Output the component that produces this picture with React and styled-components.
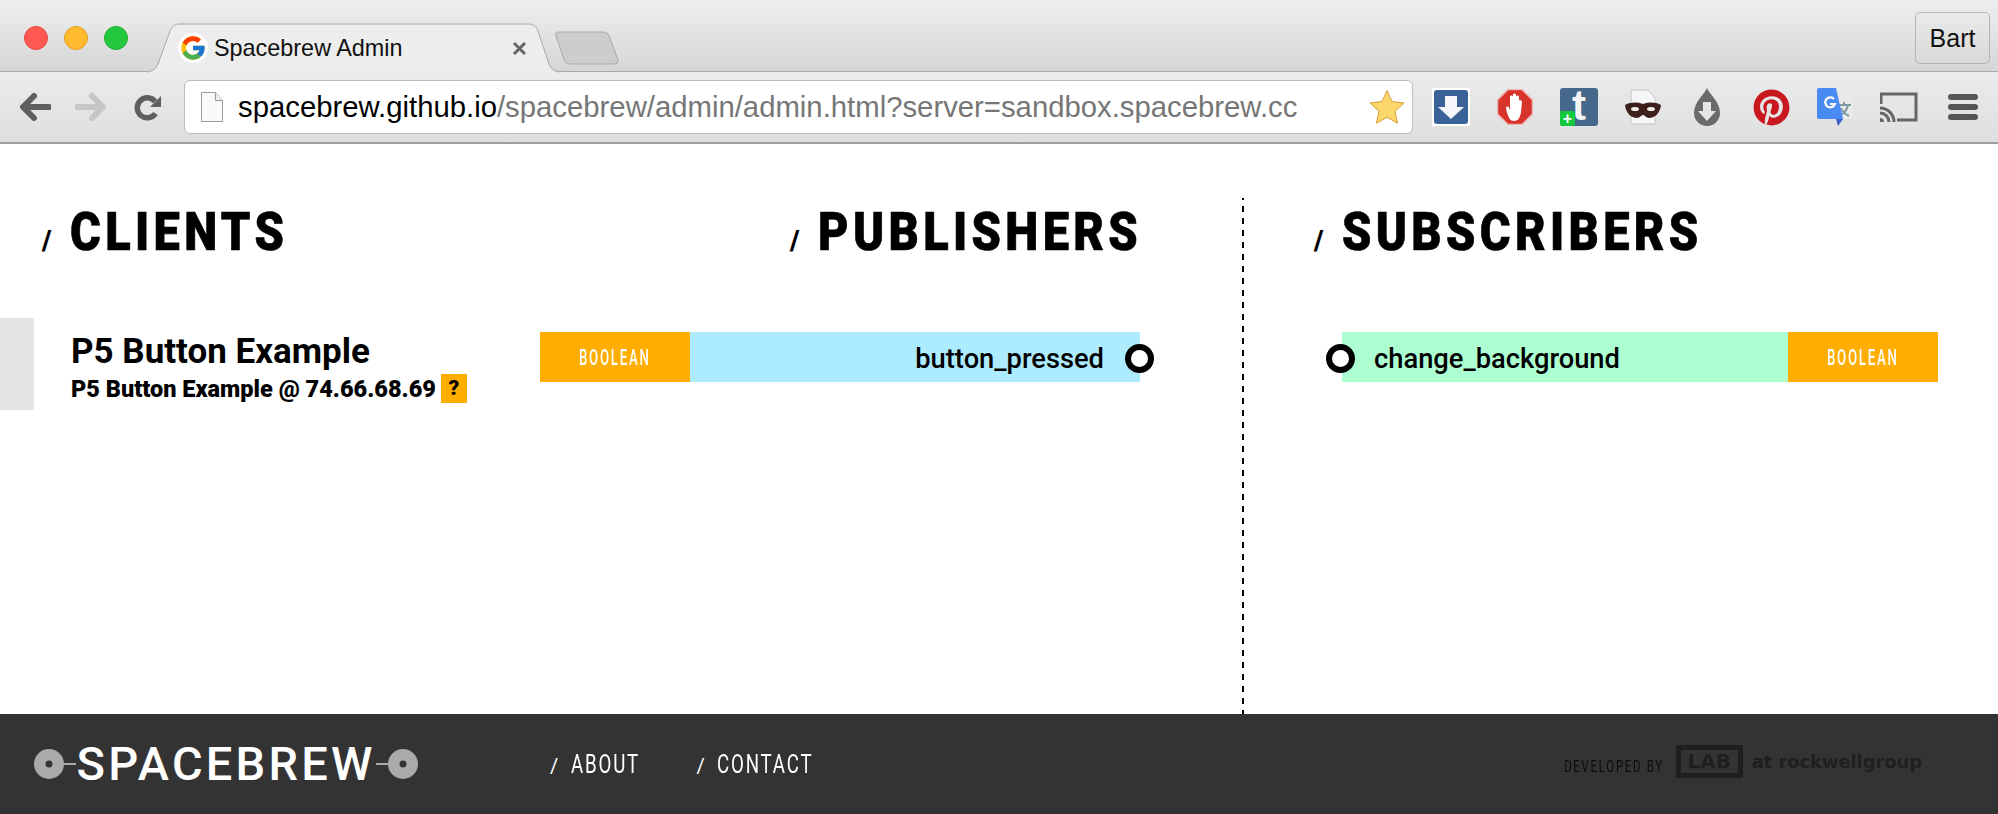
import React from "react";
import styled, { createGlobalStyle } from "styled-components";
import { FcGoogle } from "react-icons/fc";
import { FaPinterest } from "react-icons/fa";

const GlobalStyle = createGlobalStyle`
  html, body {
    margin: 0;
    padding: 0;
    background: #fff;
    font-family: "Roboto", sans-serif;
  }
  * { box-sizing: border-box; }
`;

const Page = styled.div`
  display: flex;
  flex-direction: column;
  width: 1998px;
  height: 814px;
  overflow: hidden;
`;

/* no condensed family is installed, so the DIN look is squeezed by hand */
const Squeezed = styled.span`
  display: inline-block;
  white-space: nowrap;
  transform: scaleX(${(p) => p.$x});
  transform-origin: ${(p) => p.$origin || "left"} center;
`;

/* browser chrome */
const TabStrip = styled.div`
  position: relative;
  display: flex;
  align-items: flex-start;
  height: 72px;
  padding: 0 8px 0 24px;
  background: linear-gradient(#eeeeee, #d6d6d6);
  border-bottom: 1px solid #a8a8a8;
`;

const Lights = styled.div`
  display: flex;
  gap: 16px;
  margin-top: 26px;
`;

const Light = styled.span`
  width: 24px;
  height: 24px;
  border-radius: 50%;
  background: ${(p) => p.$color};
  border: 1px solid ${(p) => p.$edge};
`;

const Tab = styled.div`
  position: relative;
  display: flex;
  align-items: center;
  width: 412px;
  height: 50px;
  margin: 23px 0 0 19px;
  padding: 0 32px 0 31px;
  font-family: "Liberation Sans", sans-serif;
  font-size: 23.4px;
  color: #111;
`;

const TabShape = styled.svg`
  position: absolute;
  left: 0;
  top: 0;
`;

const Favicon = styled.span`
  position: relative;
  display: flex;
  align-items: center;
  justify-content: center;
  width: 30px;
  height: 30px;
  margin-right: 6px;
  border-radius: 50%;
  background: #fff;
`;

const TabTitle = styled.span`
  position: relative;
  flex: 1;
`;

const TabClose = styled.svg`
  position: relative;
`;

const NewTab = styled.svg`
  margin: 31px 0 0 -4px;
`;

const ProfileButton = styled.div`
  display: flex;
  align-items: center;
  justify-content: center;
  width: 75px;
  height: 52px;
  margin: 12px 0 0 auto;
  border: 1px solid #b4b4b4;
  border-radius: 5px;
  font-family: "Liberation Sans", sans-serif;
  font-size: 25px;
  color: #111;
`;

const Toolbar = styled.div`
  display: flex;
  align-items: center;
  height: 72px;
  padding-left: 20px;
  background: linear-gradient(#ebebeb, #dfdfdf);
  border-bottom: 2px solid #9d9d9d;
`;

const NavIcon = styled.svg`
  flex: none;
  margin-right: ${(p) => p.$gap}px;
`;

const AddressBar = styled.div`
  display: flex;
  align-items: center;
  width: 1229px;
  height: 54px;
  padding: 0 7px 0 16px;
  background: #fff;
  border: 1px solid #bdbdbd;
  border-radius: 6px;
  font-family: "Liberation Sans", sans-serif;
  font-size: 29.3px;
  color: #767676;
  white-space: nowrap;
`;

const FileIcon = styled.svg`
  flex: none;
  margin-right: 15px;
`;

const Host = styled.span`
  color: #000;
`;

const Star = styled.svg`
  margin-left: auto;
  flex: none;
`;

const Extensions = styled.div`
  display: flex;
  margin-left: 6px;
`;

const ExtSlot = styled.div`
  display: flex;
  align-items: center;
  justify-content: center;
  width: 64px;
  height: 40px;
`;

const TumblrTile = styled.div`
  position: relative;
  display: flex;
  justify-content: center;
  width: 38px;
  height: 38px;
  border-radius: 3px;
  background: #46688a;
  font-family: "Liberation Sans", sans-serif;
  font-size: 42px;
  font-weight: 700;
  line-height: 36px;
  color: #f2f4f6;
`;

const TumblrPlus = styled.span`
  position: absolute;
  left: 0;
  bottom: 0;
  width: 15px;
  height: 15px;
  border-radius: 2px;
  background: #14c93c;
  font-family: "Liberation Sans", sans-serif;
  font-size: 16px;
  line-height: 15px;
  text-align: center;
  color: #fff;
`;

/* admin panels */
const Main = styled.main`
  flex: 1;
  display: flex;
  background: #fff;
`;

const ClientsColumn = styled.section`
  width: 540px;
`;

const PublishersColumn = styled.section`
  width: 702px;
  padding-right: 102px;
`;

const SubscribersColumn = styled.section`
  flex: 1;
  padding: 0 60px 0 70px;
`;

const Divider = styled.div`
  width: 2px;
  margin-top: 54px;
  background: repeating-linear-gradient(#000 0 6px, transparent 6px 12px) 0 -4px;
`;

const HeadBlock = styled.div`
  display: flex;
  align-items: baseline;
  height: 188px;
  padding: 62px 0 0 ${(p) => p.$left}px;
`;

const Slash = styled.span`
  font-family: "Roboto", sans-serif;
  font-weight: 900;
  font-size: 27px;
  color: #000;
  margin-right: 19px;
`;

const Heading = styled.h1`
  margin: 0;
  font-family: "Roboto", sans-serif;
  font-weight: 900;
  font-size: 54px;
  line-height: 52px;
  letter-spacing: 5px;
  color: #000;
  -webkit-text-stroke: 0.7px #000;
`;

const ClientRow = styled.div`
  height: 92px;
  margin-top: -14px;
  padding: 15px 0 0 37px;
  border-left: 34px solid #e4e4e4;
`;

const ClientName = styled.div`
  font-size: 35px;
  font-weight: 700;
  line-height: 38px;
  color: #000;
`;

const ClientAddress = styled.div`
  display: flex;
  align-items: center;
  gap: 5px;
  margin-top: 3px;
  font-size: 23.5px;
  font-weight: 900;
  line-height: 28px;
  color: #000;
`;

const HelpBadge = styled.span`
  width: 26px;
  height: 29px;
  background: #ffae00;
  font-size: 21px;
  line-height: 29px;
  text-align: center;
`;

const EndpointRow = styled.div`
  position: relative;
  display: flex;
  height: 50px;
  margin-left: ${(p) => (p.$sub ? 28 : 0)}px;
  flex-direction: ${(p) => (p.$sub ? "row-reverse" : "row")};
`;

const TypeTag = styled.div`
  flex: none;
  display: flex;
  align-items: center;
  justify-content: center;
  width: 150px;
  background: #ffae00;
  font-size: 22px;
  font-weight: 500;
  letter-spacing: 3px;
  color: #fff;
`;

const EndpointName = styled.div`
  flex: 1;
  display: flex;
  align-items: center;
  justify-content: ${(p) => (p.$sub ? "flex-start" : "flex-end")};
  padding: 3px 36px 0 32px;
  background: ${(p) => (p.$sub ? "#adffd2" : "#adecff")};
  font-size: 27.3px;
  font-weight: 500;
  color: #000;
`;

const Port = styled.span`
  position: absolute;
  top: 12px;
  ${(p) => (p.$sub ? "left: -16px;" : "right: -14px;")}
  width: 29px;
  height: 29px;
  border: 6px solid #000;
  border-radius: 50%;
  background: #fff;
  filter: blur(0.5px);
`;

/* footer */
const Footer = styled.footer`
  display: flex;
  align-items: center;
  height: 100px;
  padding: 0 76px 0 34px;
  background: #333;
`;

const Logo = styled.div`
  display: flex;
  align-items: center;
  width: 384px;
`;

const LogoDisc = styled.svg`
  flex: none;
`;

const LogoWire = styled.span`
  flex: none;
  width: 12px;
  height: 2px;
  background: #aaa;
`;

const LogoText = styled.span`
  flex: 1;
  font-family: "Roboto", sans-serif;
  font-size: 47px;
  font-weight: 500;
  letter-spacing: 3.2px;
  line-height: 50px;
  text-align: center;
  white-space: nowrap;
  color: #fff;
`;

const FooterNav = styled.nav`
  display: flex;
  margin-left: 132px;
`;

const FooterLink = styled.a`
  width: 146.5px;
  font-size: 26px;
  letter-spacing: 2.5px;
  white-space: nowrap;
  color: #fff;
`;

const LinkSlash = styled.span`
  font-size: 20px;
  margin-right: 10px;
`;

const Credit = styled.div`
  display: flex;
  align-items: center;
  margin-left: auto;
  color: #0c0c0c;
`;

const CreditLabel = styled.span`
  font-size: 17px;
  letter-spacing: 2.6px;
  margin-right: 12px;
  margin-top: 4px;
`;

const LabBox = styled.span`
  width: 67px;
  height: 33px;
  margin-bottom: 5px;
  border: 5px solid #1f1f1f;
  font-family: "DejaVu Sans", sans-serif;
  font-size: 20px;
  font-weight: 700;
  line-height: 23px;
  text-align: center;
  color: #1f1f1f;
  filter: blur(0.6px);
`;

const LabText = styled.span`
  margin: 0 0 5px 9px;
  font-family: "DejaVu Sans", sans-serif;
  font-size: 18px;
  font-weight: 700;
  letter-spacing: -0.1px;
  color: #1f1f1f;
  filter: blur(0.6px);
`;

/* drawn icons */
const BackIcon = ({ color, gap, flip }) => (
  <NavIcon $gap={gap} width="31" height="28" viewBox="0 0 31 28">
    <g transform={flip ? "translate(31 0) scale(-1 1)" : undefined}>
      <path d="M14 3 3 14l11 11M4 14h25" fill="none" stroke={color} strokeWidth="6" strokeLinecap="round" strokeLinejoin="round" />
    </g>
  </NavIcon>
);

const ReloadIcon = () => (
  <NavIcon $gap={23} width="27" height="27" viewBox="0 0 27 27">
    <path d="M21.5 19.5a10 10 0 1 1-.5-12" fill="none" stroke="#5f5f5f" strokeWidth="5.5" />
    <path d="M27 2v11H16z" fill="#5f5f5f" />
  </NavIcon>
);

const DownloadIcon = () => (
  <svg width="38" height="38" viewBox="0 0 38 38">
    <rect width="38" height="38" fill="#fff" />
    <rect x="2" y="2" width="34" height="34" rx="3" fill="#3a6299" />
    <path d="M13 8h12v11h7L19 31 6 19h7z" fill="#f4f6fa" />
  </svg>
);

const StopIcon = () => (
  <svg width="36" height="36" viewBox="0 0 36 36">
    <path d="M11 .5h14L35.5 11v14L25 35.5H11L.5 25V11z" fill="#d8342c" stroke="#eeb6b2" strokeWidth="1.5" />
    <path d="M9 19c0-2 3-2 3 0l1 2 0-13c0-2 3-2 3 0V6c0-2 3-2 3 0v2c0-2 3-2 3 0v4c0-2 3-1 3 1l-1 10c-1 6-3 9-7 9s-6-3-8-13z" fill="#fff" />
  </svg>
);

const MaskIcon = () => (
  <svg width="36" height="36" viewBox="0 0 36 36">
    <path d="M6 1h17l7 8v26H6z" fill="#f6f6f6" stroke="#c4c4c4" />
    <path d="M0 16c6-3 12-3 18-1 6-2 12-2 18 1-1 9-7 13-12 13-3 0-4-3-6-3s-3 3-6 3C7 29 1 25 0 16z" fill="#3d1f1c" />
    <ellipse cx="10" cy="20" rx="4" ry="2" fill="#eee" />
    <ellipse cx="26" cy="20" rx="4" ry="2" fill="#eee" />
  </svg>
);

const DropIcon = () => (
  <svg width="26" height="38" viewBox="0 0 26 38">
    <path d="M13 0c3 7 13 14 13 25a13 13 0 0 1-26 0C0 14 10 7 13 0z" fill="#6b6b6b" />
    <path d="M9 14h8v9h5L13 33 4 23h5z" fill="#e6e6e6" />
  </svg>
);

const TranslateIcon = () => (
  <svg width="36" height="38" viewBox="0 0 36 38">
    <path d="M16 8h17a3 3 0 0 1 3 3v17a3 3 0 0 1-3 3H20z" fill="#e9e9e9" />
    <path d="M21 17h13M27 14v3M31 17c-1 5-5 9-9 11M24 20c1 3 4 6 8 8" fill="none" stroke="#7d9aa3" strokeWidth="2" />
    <path d="M2 0h17l7 31H2a2 2 0 0 1-2-2V2a2 2 0 0 1 2-2z" fill="#4a8af4" />
    <path d="M19 31h7l-5 7z" fill="#3b5fc4" />
    <path d="M17 11a5 5 0 1 0 1 5h-5" fill="none" stroke="#fff" strokeWidth="2.2" />
  </svg>
);

const CastIcon = () => (
  <svg width="38" height="30" viewBox="0 0 38 30">
    <path d="M1 12V2h35v26H17" fill="none" stroke="#666" strokeWidth="3" />
    <path d="M0 16a14 14 0 0 1 14 14M0 21a9 9 0 0 1 9 9" fill="none" stroke="#666" strokeWidth="3" />
    <path d="M0 26a4 4 0 0 1 4 4H0z" fill="#666" />
  </svg>
);

const MenuIcon = () => (
  <svg width="30" height="26" viewBox="0 0 30 26">
    <rect width="30" height="6" y="0" rx="3" fill="#565656" />
    <rect width="30" height="6" y="10" rx="3" fill="#565656" />
    <rect width="30" height="6" y="20" rx="3" fill="#565656" />
  </svg>
);

const Disc = () => (
  <LogoDisc width="30" height="30" viewBox="0 0 30 30">
    <circle cx="15" cy="15" r="15" fill="#aaa" />
    <circle cx="15" cy="15" r="3.5" fill="#333" />
  </LogoDisc>
);

const App = () => (
  <Page>
    <GlobalStyle />
    <TabStrip>
      <Lights>
        <Light $color="#ff5a52" $edge="#e8463e" />
        <Light $color="#ffbb2d" $edge="#e2a020" />
        <Light $color="#25c83c" $edge="#1cab2c" />
      </Lights>
      <Tab>
        <TabShape width="412" height="50" viewBox="0 0 412 50">
          <path d="M0 49c6-1 9-3 11-8L23 8c2-5 5-7 10-7h348c5 0 8 2 10 7l11 33c2 4 4 7 10 8v1H0z" fill="#ededed" stroke="#a8a8a8" />
          <path d="M1 50h410" stroke="#ebebeb" strokeWidth="2" />
        </TabShape>
        <Favicon>
          <FcGoogle size={28} />
        </Favicon>
        <TabTitle>Spacebrew Admin</TabTitle>
        <TabClose width="15" height="15" viewBox="0 0 15 15">
          <path d="M2 2l11 11M13 2 2 13" stroke="#666" strokeWidth="3" />
        </TabClose>
      </Tab>
      <NewTab width="64" height="34" viewBox="0 0 64 34">
        <path d="M4 1h44c3 0 5 1 6 4l9 24c0 3-1 4-4 4H16c-4 0-6-1-7-5L1 5c-1-3 0-4 3-4z" fill="#cdcdcd" stroke="#a9a9a9" />
      </NewTab>
      <ProfileButton>Bart</ProfileButton>
    </TabStrip>
    <Toolbar>
      <BackIcon color="#5f5f5f" gap={24} />
      <BackIcon color="#c6c6c6" gap={28} flip />
      <ReloadIcon />
      <AddressBar>
        <FileIcon width="22" height="30" viewBox="0 0 22 30">
          <path d="M.5.5h14l7 8v21H.5z" fill="#fafafa" stroke="#9a9a9a" />
          <path d="M14.5.5v8h7" fill="#eee" stroke="#9a9a9a" />
        </FileIcon>
        <span>
          <Host>spacebrew.github.io</Host>/spacebrew/admin/admin.html?server=sandbox.spacebrew.cc
        </span>
        <Star width="36" height="36" viewBox="0 0 36 36">
          <path d="M18 1.5l5 11 12 1.5-9 8.2 2.5 12L18 28.3 7.5 34.2l2.5-12L1 14l12-1.5z" fill="#fcd76b" stroke="#d6a032" strokeLinejoin="round" />
        </Star>
      </AddressBar>
      <Extensions>
        <ExtSlot><DownloadIcon /></ExtSlot>
        <ExtSlot><StopIcon /></ExtSlot>
        <ExtSlot>
          <TumblrTile>
            t
            <TumblrPlus>+</TumblrPlus>
          </TumblrTile>
        </ExtSlot>
        <ExtSlot><MaskIcon /></ExtSlot>
        <ExtSlot><DropIcon /></ExtSlot>
        <ExtSlot><FaPinterest size={37} color="#c8171e" /></ExtSlot>
        <ExtSlot><TranslateIcon /></ExtSlot>
        <ExtSlot><CastIcon /></ExtSlot>
        <ExtSlot><MenuIcon /></ExtSlot>
      </Extensions>
    </Toolbar>
    <Main>
      <ClientsColumn>
        <HeadBlock $left={42}>
          <Slash>/</Slash>
          <Heading><Squeezed $x={0.87}>CLIENTS</Squeezed></Heading>
        </HeadBlock>
        <ClientRow>
          <ClientName>P5 Button Example</ClientName>
          <ClientAddress>
            P5 Button Example @ 74.66.68.69
            <HelpBadge>?</HelpBadge>
          </ClientAddress>
        </ClientRow>
      </ClientsColumn>
      <PublishersColumn>
        <HeadBlock $left={250}>
          <Slash>/</Slash>
          <Heading><Squeezed $x={0.87}>PUBLISHERS</Squeezed></Heading>
        </HeadBlock>
        <EndpointRow>
          <TypeTag><Squeezed $x={0.6} $origin="center">BOOLEAN</Squeezed></TypeTag>
          <EndpointName>button_pressed</EndpointName>
          <Port />
        </EndpointRow>
      </PublishersColumn>
      <Divider />
      <SubscribersColumn>
        <HeadBlock $left={0}>
          <Slash>/</Slash>
          <Heading><Squeezed $x={0.87}>SUBSCRIBERS</Squeezed></Heading>
        </HeadBlock>
        <EndpointRow $sub>
          <TypeTag><Squeezed $x={0.6} $origin="center">BOOLEAN</Squeezed></TypeTag>
          <EndpointName $sub>change_background</EndpointName>
          <Port $sub />
        </EndpointRow>
      </SubscribersColumn>
    </Main>
    <Footer>
      <Logo>
        <Disc />
        <LogoWire />
        <LogoText>SPACEBREW</LogoText>
        <LogoWire />
        <Disc />
      </Logo>
      <FooterNav>
        <FooterLink><LinkSlash>/</LinkSlash><Squeezed $x={0.72}>ABOUT</Squeezed></FooterLink>
        <FooterLink><LinkSlash>/</LinkSlash><Squeezed $x={0.72}>CONTACT</Squeezed></FooterLink>
      </FooterNav>
      <Credit>
        <CreditLabel><Squeezed $x={0.67} $origin="right">DEVELOPED BY</Squeezed></CreditLabel>
        <LabBox>LAB</LabBox>
        <LabText>at rockwellgroup</LabText>
      </Credit>
    </Footer>
  </Page>
);

export default App;
